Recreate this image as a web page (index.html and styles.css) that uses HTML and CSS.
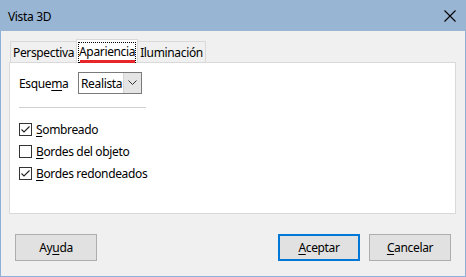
FILE: index.html
```html
<!DOCTYPE html>
<html>
<head>
<meta charset="utf-8">
<link rel="stylesheet" href="styles.css">
</head>
<body>
<div class="window">
  <div class="titlebar">
    <span class="title">Vista 3D</span>
    <svg class="close" width="12" height="12" viewBox="0 0 12 12"><path d="M0.5 0.5 L11.5 11.5 M11.5 0.5 L0.5 11.5" stroke="#000" stroke-width="1.1" fill="none"/></svg>
  </div>
  <div class="content">
    <div class="tabs">
      <div class="tab">Perspectiva</div>
      <div class="tab active"><span class="focus">Apariencia</span><span class="redline"></span></div>
      <div class="tab">Iluminación</div>
    </div>
    <div class="panel">
      <div class="row">
        <span class="label">Esque<u>m</u>a</span>
        <div class="select">
          <span class="select-text">Realista</span>
          <span class="select-btn"><svg width="9" height="6" viewBox="0 0 9 6"><path d="M0.5 0.5 L4.5 4.5 L8.5 0.5" stroke="#333" stroke-width="1" fill="none"/></svg></span>
        </div>
      </div>
      <div class="sep"></div>
      <div class="checks">
        <label class="check"><span class="box"><svg width="11" height="11" viewBox="0 0 11 11"><path d="M1.5 5.5 L4 8 L9.5 2.5" stroke="#222" stroke-width="1.1" fill="none"/></svg></span><span><u>S</u>ombreado</span></label>
        <label class="check"><span class="box"></span><span><u>B</u>ordes del objeto</span></label>
        <label class="check"><span class="box"><svg width="11" height="11" viewBox="0 0 11 11"><path d="M1.5 5.5 L4 8 L9.5 2.5" stroke="#222" stroke-width="1.1" fill="none"/></svg></span><span><u>B</u>ordes redondeados</span></label>
      </div>
    </div>
    <div class="buttons">
      <button class="btn">Ay<u>u</u>da</button>
      <div class="spacer"></div>
      <button class="btn primary"><u>A</u>ceptar</button>
      <button class="btn"><u>C</u>ancelar</button>
    </div>
  </div>
</div>
</body>
</html>
```

FILE: styles.css
```css
html, body {
  margin: 0;
  padding: 0;
  background: #f0f0f0;
}
body {
  font-family: "Noto Sans", "Open Sans", sans-serif;
  font-size: 12px;
  letter-spacing: -0.35px;
  color: #000;
}
u {
  text-decoration: underline;
  text-underline-offset: 2px;
}
.window {
  width: 466px;
  height: 277px;
  box-sizing: border-box;
  border: 1px solid #8eb0d6;
  border-top: none;
  background: #f0f0f0;
  display: flex;
  flex-direction: column;
}
.titlebar {
  height: 31px;
  flex: none;
  background: #98b5d3;
  display: flex;
  align-items: center;
  justify-content: space-between;
  padding: 0 10px 0 8px;
  margin: 0 -1px;
}
.title {
  font-size: 12px;
  padding-top: 1px;
}
.close {
  display: block;
}
.content {
  flex: 1;
  display: flex;
  flex-direction: column;
  padding: 8px 9px 0 8px;
}
.tabs {
  display: flex;
  align-items: flex-end;
  height: 23px;
  padding-left: 1px;
}
.tab {
  height: 21px;
  box-sizing: border-box;
  border: 1px solid #d9d9d9;
  border-bottom: none;
  padding: 2px 2px 0;
  display: flex;
  align-items: center;
  line-height: 1;
  background: #f0f0f0;
}
.tab.active {
  height: 23px;
  background: #fff;
  position: relative;
  padding: 1px 1px 0;
  margin: 0 -1px;
  z-index: 1;
}
.focus {
  border: 1px dotted #000;
  padding: 3px 0 4px;
  margin-top: 1px;
}
.redline {
  position: absolute;
  left: 3px;
  right: 2px;
  bottom: -1px;
  height: 3px;
  background: #e8262a;
}
.panel {
  height: 152px;
  box-sizing: border-box;
  background: #fff;
  border: 1px solid #d9d9d9;
  padding: 9px 9px 0 9px;
}
.row {
  display: flex;
  align-items: center;
  height: 22px;
}
.label {
  width: 59px;
}
.select {
  width: 64px;
  height: 22px;
  box-sizing: border-box;
  border: 1px solid #7a7a7a;
  display: flex;
  background: #fff;
}
.select-text {
  flex: 1;
  padding-left: 2px;
  display: flex;
  align-items: center;
}
.select-btn {
  width: 17px;
  background: #e5e5e5;
  border-left: 1px solid #d4d4d4;
  display: flex;
  align-items: center;
  justify-content: center;
}
.sep {
  width: 127px;
  height: 1px;
  background: #d0d0d0;
  margin: 13px 0 15px 0;
}
.checks {
  display: flex;
  flex-direction: column;
  gap: 9px;
}
.check {
  display: flex;
  align-items: center;
  gap: 4px;
  height: 13px;
}
.box {
  width: 13px;
  height: 13px;
  box-sizing: border-box;
  border: 1px solid #333;
  background: #fff;
  display: flex;
  align-items: center;
  justify-content: center;
}
.box svg {
  display: block;
}
.buttons {
  display: flex;
  margin-top: 20px;
  padding-left: 6px;
  gap: 9px;
  padding-right: 5px;
}
.spacer {
  flex: 1;
}
.btn {
  width: 82px;
  height: 27px;
  box-sizing: border-box;
  border: 1px solid #adadad;
  background: #e1e1e1;
  font-family: inherit;
  font-size: 12px;
  letter-spacing: -0.35px;
  color: #000;
  padding: 0;
  margin: 0;
}
.btn.primary {
  border: 2px solid #0078d7;
}
```
